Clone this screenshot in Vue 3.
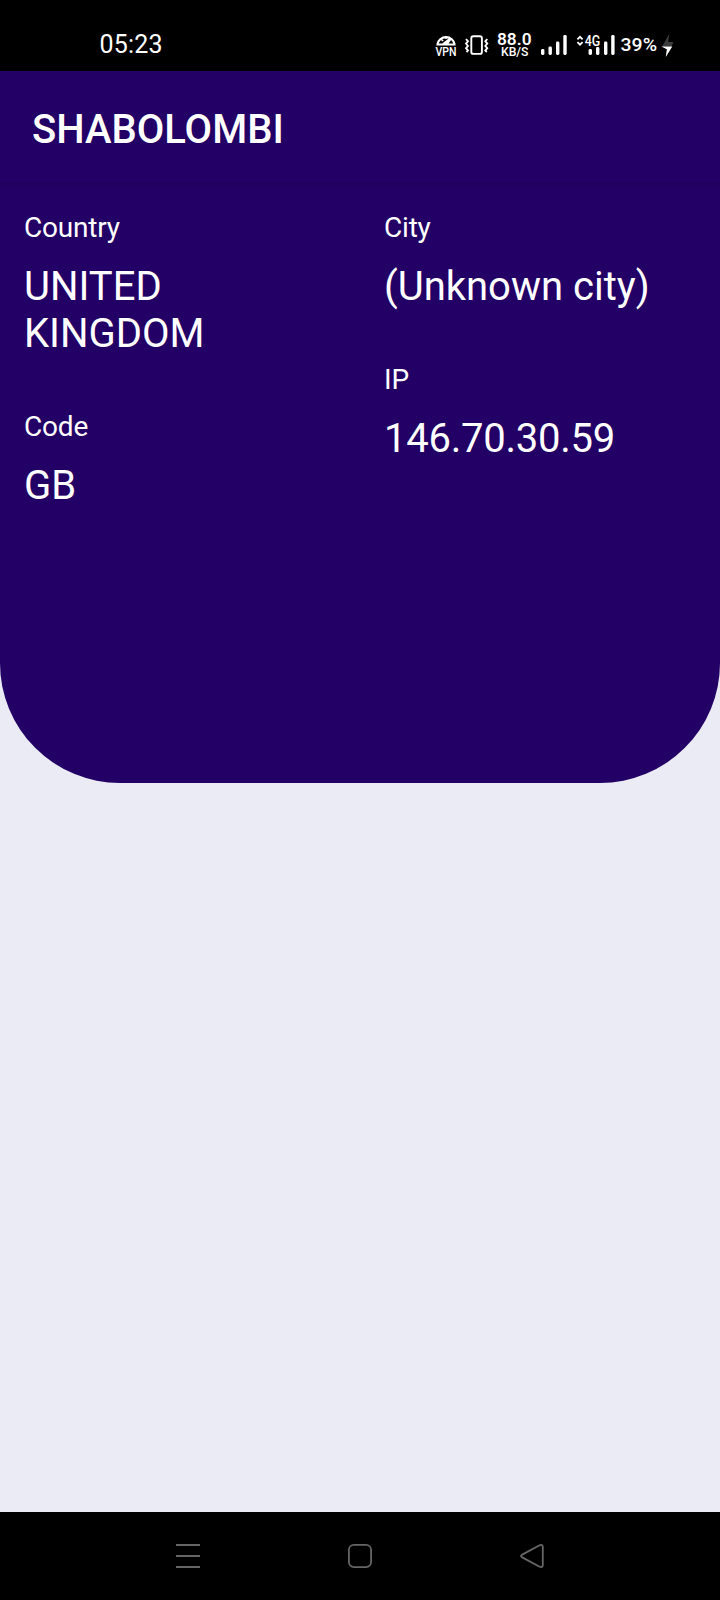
<script setup>
const columns = [
  [
    { label: 'Country', value: 'UNITED KINGDOM' },
    { label: 'Code', value: 'GB' },
  ],
  [
    { label: 'City', value: '(Unknown city)' },
    { label: 'IP', value: '146.70.30.59', numeric: true },
  ],
]
</script>

<template>
  <div class="screen">
    <header class="status">
      <svg class="status-art" viewBox="0 0 720 71" width="720" height="71">
        <g fill="#fff">
          <text x="99.5" y="53.4" font-size="25" textLength="63">05:23</text>

          <!-- VPN -->
          <path d="M437.3 44.6A8.8 8.8 0 0 1 454.7 44.6" fill="none" stroke="#fff" stroke-width="2.2" />
          <path d="M436.2 45.6L437.4 43.6H442.2L449.6 37.8L451.4 39.4L448.6 43.6H454.6L455.8 45.6Z" />
          <path d="M440.3 38.6L443.2 41M446 36V39" fill="none" stroke="#fff" stroke-width="1.5" />
          <text x="435.5" y="56" font-size="12.2" font-weight="500" textLength="21" lengthAdjust="spacingAndGlyphs">VPN</text>

          <!-- network speed -->
          <text x="497" y="45" font-size="16.5" font-weight="600" textLength="34.5" lengthAdjust="spacingAndGlyphs">88.0</text>
          <text x="501" y="56.4" font-size="12.4" font-weight="500" textLength="27.5" lengthAdjust="spacingAndGlyphs">KB/S</text>

          <!-- first signal -->
          <rect x="541" y="49" width="3.4" height="6" rx="1.4" />
          <rect x="548.5" y="46.5" width="3.4" height="8.5" rx="1.4" />
          <rect x="556" y="41.5" width="3.4" height="13.5" rx="1.4" />
          <rect x="563.3" y="35" width="3.4" height="20" rx="1.4" />

          <!-- second signal -->
          <rect x="588.6" y="49" width="3.4" height="6" rx="1.4" />
          <rect x="596" y="47" width="3.4" height="8" rx="1.4" />
          <rect x="604" y="41.5" width="3.4" height="13.5" rx="1.4" />
          <rect x="611.2" y="35" width="3.4" height="20" rx="1.4" />
          <text x="584.7" y="46" font-size="13.8" font-weight="500" textLength="15.5" lengthAdjust="spacingAndGlyphs">4G</text>
          <text x="620.5" y="51.2" font-size="18.5" font-weight="500" textLength="36.5" lengthAdjust="spacingAndGlyphs">39%</text>
        </g>
        <path d="M577.4 39.3L580 36.8L582.6 39.3M577.4 42.2L580 44.7L582.6 42.2" fill="none" stroke="#fff" stroke-width="1.8" />

        <!-- vibrate -->
        <g fill="none" stroke="#fff">
          <rect x="471.3" y="36.3" width="10.6" height="17.6" rx="2" stroke-width="1.9" />
          <path d="M466 39L468 41.3L466 43.6L468 45.9L466 48.2L468 50.5L466.5 52M487.3 39L485.3 41.3L487.3 43.6L485.3 45.9L487.3 48.2L485.3 50.5L486.8 52" stroke-width="1.8" />
        </g>

        <!-- charging bolt -->
        <path d="M669.5 33.5L662 46.5H671.5L673.5 42H668.2Z" fill="#3c3c3c" />
        <path d="M661.3 46.5H672.3L665.8 57L666.8 49.3Z" fill="#fff" />
      </svg>
    </header>

    <main class="content">
      <section class="panel">
        <h1 class="title">SHABOLOMBI</h1>
        <div class="info">
          <div v-for="(column, i) in columns" :key="i" class="column">
            <div v-for="item in column" :key="item.label" class="item">
              <div class="label">{{ item.label }}</div>
              <div class="value" :class="{ numeric: item.numeric }">{{ item.value }}</div>
            </div>
          </div>
        </div>
      </section>
    </main>

    <nav class="nav">
      <svg width="24" height="26" viewBox="0 0 24 26" fill="none" stroke="#666" stroke-width="2">
        <path d="M0 2H24M0 13H24M0 24H24" />
      </svg>
      <svg width="24" height="26" viewBox="0 0 24 26" fill="none" stroke="#666" stroke-width="1.8">
        <rect x="0.9" y="1.9" width="22.2" height="22.2" rx="5" />
      </svg>
      <svg width="24" height="26" viewBox="0 0 24 26" fill="none" stroke="#666" stroke-width="1.8" stroke-linejoin="round">
        <path d="M1.8 11.9L19.6 2.3Q22.7 1 22.8 4V22Q22.7 25 19.6 23.7L1.8 14.1Q0.3 13 1.8 11.9Z" />
      </svg>
    </nav>
  </div>
</template>

<style>
body {
  margin: 0;
  background: #000;
}
</style>

<style scoped>
.screen {
  width: 720px;
  height: 1600px;
  display: flex;
  flex-direction: column;
  overflow: hidden;
  font-family: Roboto, "Liberation Sans", sans-serif;
  background: #000;
}

.status {
  height: 71px;
  flex: none;
}

.status-art {
  display: block;
}

.content {
  flex: 1;
  background: #ebebf5;
}

.panel {
  height: 712px;
  box-sizing: border-box;
  border-radius: 0 0 120px 120px;
  background: #230065;
  color: #fff;
}

.title {
  margin: 0;
  height: 112px;
  box-sizing: border-box;
  padding: 35px 32px 0;
  font-size: 40px;
  line-height: 47px;
  font-weight: 500;
  background: #230065;
  box-shadow: 0 1px 4px rgba(0, 0, 0, 0.16);
}

.info {
  display: grid;
  grid-template-columns: 1fr 1fr;
  padding-top: 28px;
}

.column {
  display: flex;
  flex-direction: column;
  gap: 53px;
  padding: 0 64px 0 24px;
}

.column + .column {
  padding-right: 24px;
}

.label {
  font-size: 28px;
  line-height: 33px;
  letter-spacing: -0.2px;
}

.value {
  margin-top: 19px;
  font-size: 40px;
  line-height: 47px;
}

.numeric {
  letter-spacing: -0.25px;
}

.nav {
  height: 88px;
  flex: none;
  display: flex;
  justify-content: center;
  align-items: center;
  gap: 148px;
}
</style>
